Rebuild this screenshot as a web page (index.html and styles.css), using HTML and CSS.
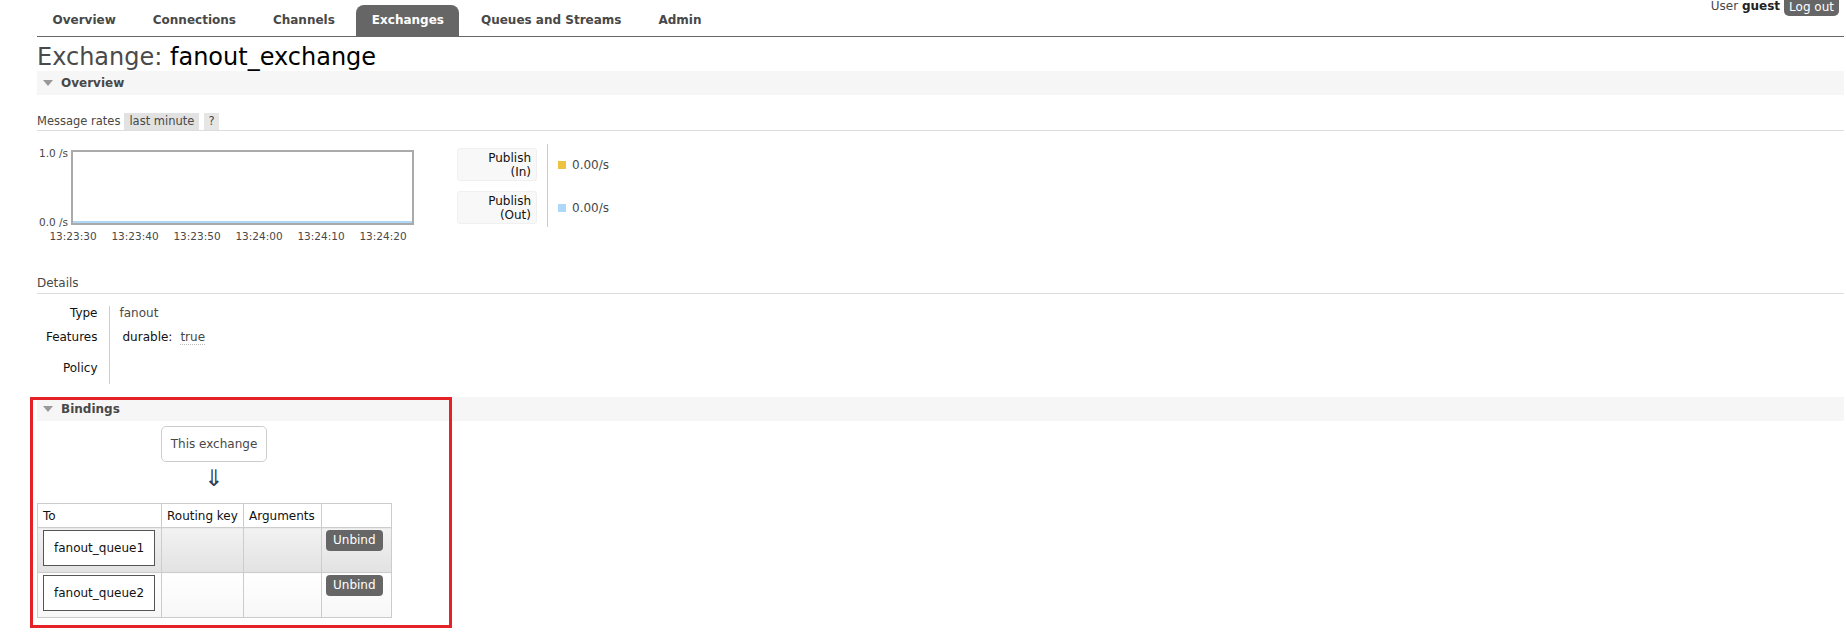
FILE: index.html
```html
<!DOCTYPE html>
<html lang="en">
<head>
    <meta charset="UTF-8">
    <title>RabbitMQ Management</title>
    <link rel="stylesheet" href="styles.css">
</head>
<body>
    <div class="header">
        <ul class="menu">
            <li><a href="#">Overview</a></li>
            <li><a href="#">Connections</a></li>
            <li><a href="#">Channels</a></li>
            <li><a href="#" class="selected">Exchanges</a></li>
            <li><a href="#">Queues and Streams</a></li>
            <li><a href="#">Admin</a></li>
        </ul>
        <div class="login">
            <span>User <b>guest</b></span>
            <span class="logout">Log out</span>
        </div>
    </div>

    <div class="main">
        <h1>Exchange: <b>fanout_exchange</b></h1>

        <div class="section">
            <h2><span class="tri"></span>Overview</h2>
            <div class="rates">
                <span>Message rates</span>
                <span class="range">last minute</span>
                <span class="help">?</span>
            </div>
            <div class="chart-row">
                <div class="chart">
                    <div class="yaxis">
                        <span>1.0 /s</span>
                        <span>0.0 /s</span>
                    </div>
                    <div class="plot">
                        <div class="series"></div>
                    </div>
                    <div class="xaxis">
                        <span>13:23:30</span>
                        <span>13:23:40</span>
                        <span>13:23:50</span>
                        <span>13:24:00</span>
                        <span>13:24:10</span>
                        <span>13:24:20</span>
                    </div>
                </div>
                <div class="legend">
                    <div class="legend-keys">
                        <div class="key">Publish<br>(In)</div>
                        <div class="key">Publish<br>(Out)</div>
                    </div>
                    <div class="legend-values">
                        <div class="value"><span class="swatch in"></span>0.00/s</div>
                        <div class="value"><span class="swatch out"></span>0.00/s</div>
                    </div>
                </div>
            </div>

            <h3>Details</h3>
            <table class="facts">
                <tr>
                    <th>Type</th>
                    <td>fanout</td>
                </tr>
                <tr class="tall">
                    <th>Features</th>
                    <td><span class="feature">durable:</span><span class="flag">true</span></td>
                </tr>
                <tr class="last">
                    <th>Policy</th>
                    <td></td>
                </tr>
            </table>
        </div>

        <div class="section bindings-section">
            <h2><span class="tri"></span>Bindings</h2>
            <div class="source">This exchange</div>
            <div class="arrow">&#8659;</div>
            <table class="bindings">
                <colgroup>
                    <col class="c-to">
                    <col class="c-key">
                    <col class="c-args">
                    <col class="c-act">
                </colgroup>
                <tr>
                    <th>To</th>
                    <th>Routing key</th>
                    <th>Arguments</th>
                    <th></th>
                </tr>
                <tr class="alt1">
                    <td><span class="endpoint">fanout_queue1</span></td>
                    <td></td>
                    <td></td>
                    <td><span class="btn">Unbind</span></td>
                </tr>
                <tr class="alt2">
                    <td><span class="endpoint">fanout_queue2</span></td>
                    <td></td>
                    <td></td>
                    <td><span class="btn">Unbind</span></td>
                </tr>
            </table>
        </div>
    </div>

    <div class="annotation"></div>
</body>
</html>
```

FILE: styles.css
```css
*{
    margin: 0;
    padding: 0;
    box-sizing: border-box;
}
body{
    font: 12px "DejaVu Sans", Verdana, sans-serif;
    color: #484848;
    background: #fff;
}

/* top bar */
.header{
    display: flex;
    justify-content: space-between;
    align-items: flex-start;
    margin: 0 2px 0 37px;
    border-bottom: 1px solid #666;
}
.menu{
    display: flex;
    list-style: none;
    padding-top: 5px;
}
.menu li{
    padding-right: 1px;
}
.menu a{
    display: block;
    padding: 8px 15.5px 9px;
    margin-right: 5px;
    font-weight: bold;
    line-height: 14px;
    color: #484848;
    text-decoration: none;
    border-radius: 8px 8px 0 0;
}
.menu a.selected{
    background-color: #666;
    color: #fff;
}
.login{
    display: flex;
    align-items: flex-start;
    gap: 4px;
    margin-right: 5px;
    line-height: 12px;
}
.login b{
    color: #222;
}
.logout{
    background: #666;
    color: #fff;
    padding: 1px 5px 3px;
    border-radius: 0 0 5px 5px;
}

.main{
    margin: 0 2px 0 37px;
}
h1{
    margin-top: 6px;
    font-size: 24px;
    line-height: 28px;
    font-weight: normal;
    color: #4a4a4a;
}
h1 b{
    font-weight: normal;
    color: #000;
}

/* collapsible sections */
.section h2{
    display: flex;
    align-items: center;
    gap: 8px;
    height: 24px;
    padding-left: 6px;
    background: #f6f6f6;
    font-size: 12px;
    font-weight: bold;
}
.tri{
    width: 0;
    height: 0;
    border-left: 5px solid transparent;
    border-right: 5px solid transparent;
    border-top: 6px solid #999;
}
.rates{
    display: flex;
    height: 18px;
    margin-top: 18px;
    border-bottom: 1px solid #ddd;
    font-size: 11.5px;
    line-height: 17px;
}
.rates .range{
    margin-left: 4px;
    padding: 0 5px;
    background: #e2e2e2;
}
.rates .help{
    margin-left: 5px;
    padding: 0 4px;
    background: #e6e6e6;
}

/* chart */
.chart-row{
    display: flex;
    align-items: flex-start;
    margin-top: 13px;
}
.chart{
    display: grid;
    grid-template-columns: 34px 343px;
    margin-top: 6px;
    font-size: 10.5px;
    line-height: 12px;
}
.yaxis{
    display: flex;
    flex-direction: column;
    justify-content: space-between;
    margin: -3px 0;
    padding-right: 3px;
    text-align: right;
}
.plot{
    display: flex;
    flex-direction: column;
    justify-content: flex-end;
    height: 75px;
    border: 2px solid #aaa;
}
.plot .series{
    height: 2px;
    background: #afd8f8;
}
.xaxis{
    grid-column: 1 / -1;
    display: flex;
    padding-left: 5px;
    margin-top: 5px;
}
.xaxis span{
    width: 62px;
    text-align: center;
}
.legend{
    display: flex;
    margin-left: 43px;
}
.legend-keys{
    display: flex;
    flex-direction: column;
    gap: 10px;
    padding: 4px 10px 3px 0;
    border-right: 1px solid #ccc;
}
.key{
    width: 80px;
    height: 33px;
    padding: 2px 5px;
    background: #f8f8f8;
    border: 1px solid #f0f0f0;
    border-radius: 3px;
    text-align: right;
    line-height: 14px;
    color: #111;
}
.legend-values{
    display: flex;
    flex-direction: column;
    gap: 10px;
    padding: 4px 0 3px 10px;
}
.value{
    display: flex;
    align-items: center;
    gap: 6px;
    height: 33px;
}
.swatch{
    width: 8px;
    height: 8px;
}
.swatch.in{
    background: #edc240;
}
.swatch.out{
    background: #afd8f8;
}

/* details */
h3{
    margin-top: 33px;
    padding-bottom: 2px;
    font-size: 12px;
    font-weight: normal;
    line-height: 16px;
    border-bottom: 1px solid #ddd;
}
.facts{
    margin-top: 12px;
    border-collapse: collapse;
}
.facts th,
.facts td{
    vertical-align: top;
    line-height: 14px;
    padding-bottom: 10px;
}
.facts th{
    width: 72px;
    padding-right: 11px;
    text-align: right;
    font-weight: normal;
    color: #111;
    border-right: 1px solid #ccc;
}
.facts td{
    padding-left: 10px;
}
.facts .tall th,
.facts .tall td{
    padding-bottom: 17px;
}
.facts .last th,
.facts .last td{
    padding-bottom: 9px;
}
.feature{
    margin-left: 3px;
    margin-right: 8px;
    color: #111;
}
.flag{
    border-bottom: 1px dotted #bbb;
}

/* bindings */
.bindings-section{
    margin-top: 13px;
}
.source{
    display: flex;
    align-items: center;
    justify-content: center;
    width: 106px;
    height: 36px;
    margin: 5px 0 0 124px;
    border: 1px solid #ccc;
    border-radius: 5px;
}
.arrow{
    width: 106px;
    margin: 4px 0 0 124px;
    text-align: center;
    font-size: 23px;
    line-height: 24px;
    color: #2f3f55;
}
.bindings{
    margin-top: 13px;
    width: 355px;
    table-layout: fixed;
    border-collapse: collapse;
}
.c-to{ width: 124px; }
.c-key{ width: 82px; }
.c-args{ width: 78px; }
.c-act{ width: 70px; }
.bindings th,
.bindings td{
    border: 1px solid #ccc;
    text-align: left;
    vertical-align: top;
}
.bindings th{
    padding: 5px 5px 4px;
    font-weight: normal;
    line-height: 14px;
    color: #111;
}
.bindings td{
    padding: 2px 5px 6px;
}
.bindings tr.alt1 td{
    background: linear-gradient(#f2f2f2, #e2e2e2);
}
.bindings tr.alt2 td{
    background: linear-gradient(#fff, #f7f7f7);
}
.endpoint{
    display: block;
    width: 112px;
    height: 36px;
    border: 1px solid #555;
    background: #fff;
    text-align: center;
    line-height: 34px;
    color: #111;
}
.bindings td:last-child{
    padding-left: 4px;
}
.btn{
    display: inline-block;
    padding: 0 7px;
    line-height: 21px;
    background: #666;
    color: #fff;
    border-radius: 4px;
}

/* red marker drawn over the bindings block */
.annotation{
    position: absolute;
    left: 30px;
    top: 397px;
    width: 422px;
    height: 231px;
    border: 3px solid #e42228;
}
```
